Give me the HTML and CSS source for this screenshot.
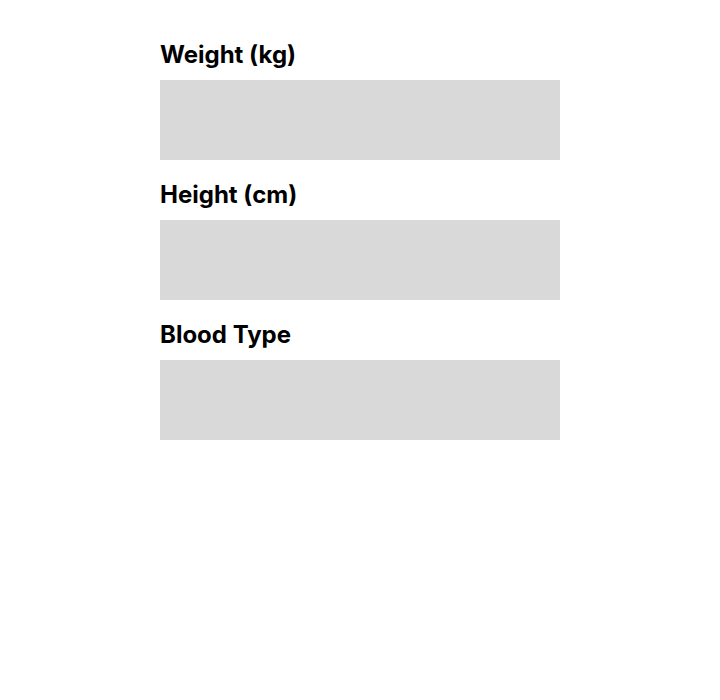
FILE: index.html
```html
<!DOCTYPE html>
<html>
<head>
<meta charset="utf-8">
<link rel="stylesheet" href="styles.css">
</head>
<body>
<div class="form">
  <div class="field">
    <div class="label">Weight (kg)</div>
    <div class="input"></div>
  </div>
  <div class="field">
    <div class="label">Height (cm)</div>
    <div class="input"></div>
  </div>
  <div class="field">
    <div class="label">Blood Type</div>
    <div class="input"></div>
  </div>
</div>
</body>
</html>
```
FILE: styles.css
```css
html, body {
  margin: 0;
  padding: 0;
  background: #ffffff;
}
body {
  font-family: Inter, "Liberation Sans", sans-serif;
}
.form {
  width: 400px;
  margin: 0 auto;
  padding-top: 40px;
  display: flex;
  flex-direction: column;
  gap: 20px;
}
.field {
  display: flex;
  flex-direction: column;
}
.label {
  font-size: 24px;
  font-weight: 700;
  line-height: 29px;
  color: #000;
  margin-bottom: 11px;
}
.input {
  height: 80px;
  background: #d9d9d9;
}
```
